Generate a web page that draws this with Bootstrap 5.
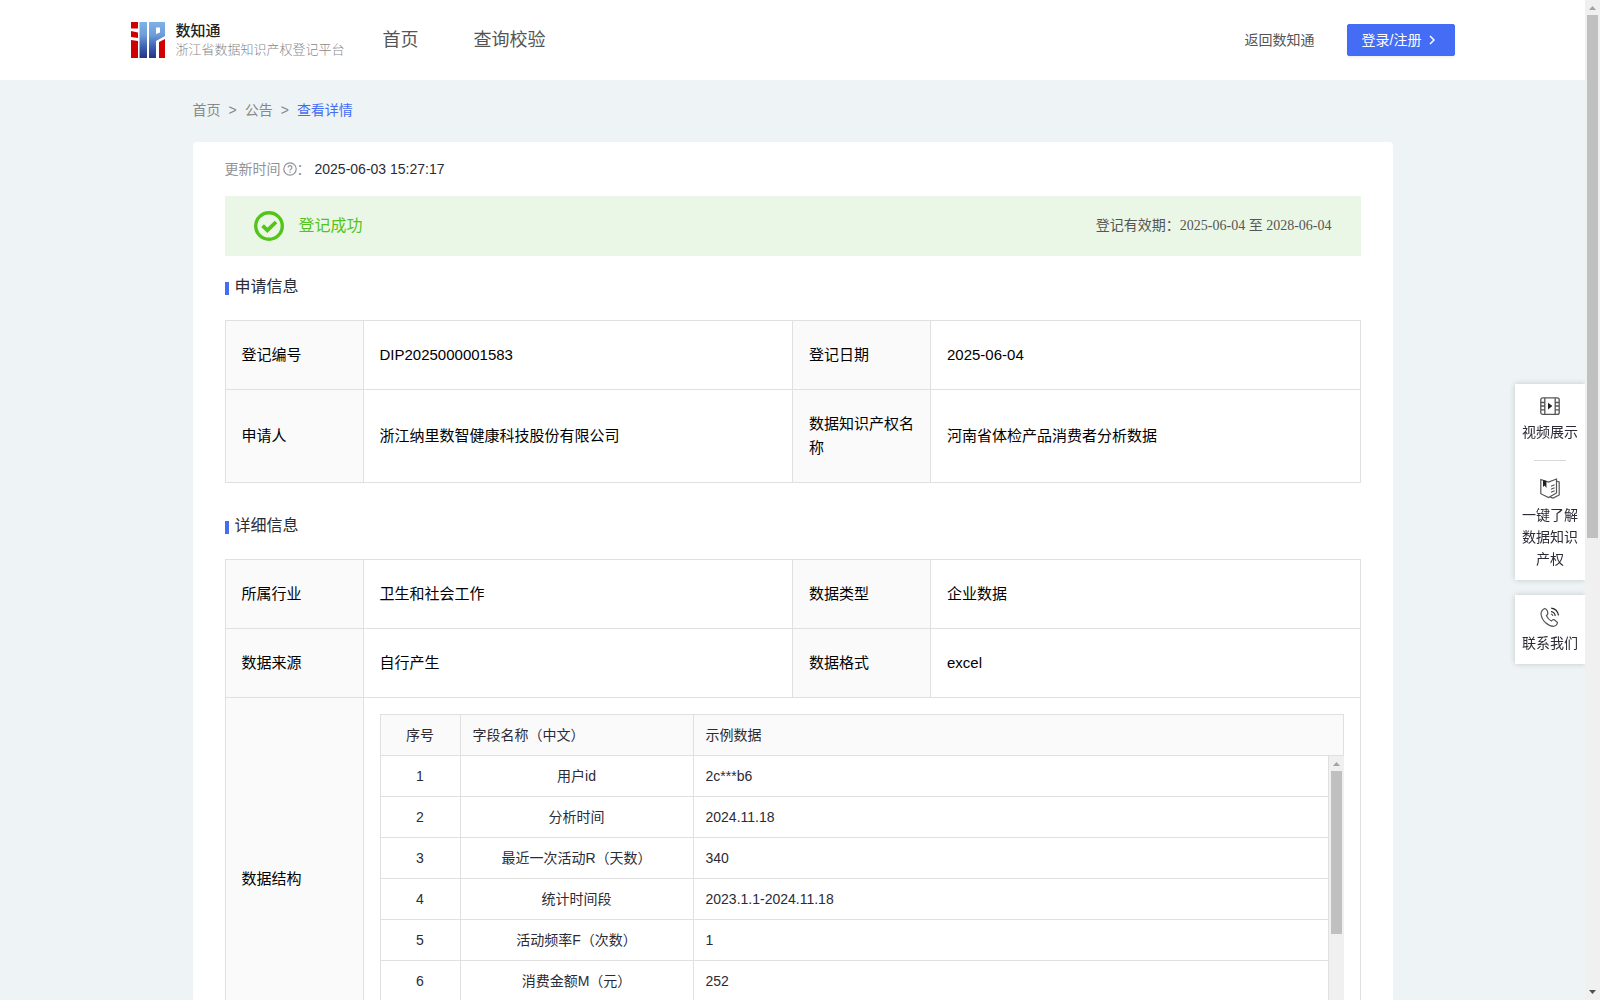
<!DOCTYPE html>
<html lang="zh-CN">
<head>
<meta charset="utf-8">
<meta name="viewport" content="width=device-width, initial-scale=1">
<title>浙江省数据知识产权登记平台</title>
<link href="https://cdn.jsdelivr.net/npm/bootstrap@5.3.0/dist/css/bootstrap.min.css" rel="stylesheet">
<style>
  :root { --brand: #446cf4; --line: #e0e0e0; --cjk: "Noto Sans CJK SC"; }
  body { font: 14px/22px "Liberation Sans", var(--cjk), sans-serif; color: #2b2b36; background: #eef3f6; }
  a { text-decoration: none; color: inherit; }
  .shell { height: 100vh; }
  .page-view { overflow-y: auto; scrollbar-width: none; min-width: 0; }
  .page-view::-webkit-scrollbar, .grid-rows::-webkit-scrollbar { display: none; }

  .scroll-track { width: 15px; flex: none; background: #f0f0f0; }
  .scroll-track svg { display: block; flex: none; }
  .scroll-thumb { width: 11px; background: #c0c0c0; }
  .page-thumb { height: 523px; }
  .grid-thumb { height: 163px; }

  .site-header { background: #fff; height: 80px; }
  .header-inner { max-width: 1324px; }
  .brand-link { gap: 10px; }
  .brand-name { font-size: 15px; line-height: 20px; font-weight: 500; color: #222; }
  .brand-sub { font-size: 13px; line-height: 18px; font-weight: 300; color: #888; }
  .site-nav { gap: 55px; margin-left: 38px; font-size: 18px; line-height: 24px; color: #555; }
  .back-link { color: #555; }
  .btn-login { --bs-btn-font-size: 14px; --bs-btn-bg: var(--brand); --bs-btn-color: #fff; --bs-btn-border-color: var(--brand);
    --bs-btn-hover-bg: #345ce4; --bs-btn-hover-color: #fff; --bs-btn-border-radius: 2px;
    width: 108px; height: 32px; padding: 0 14px; line-height: 22px; box-shadow: 0 2px 2px rgba(0,0,0,.05); }

  .page-width { max-width: 1200px; }
  .crumbs { padding: 19px 0 21px; color: #888; gap: 8px; }
  .crumbs .current { color: var(--brand); }
  .sheet { background: #fff; border-radius: 4px; padding: 16px 32px 32px; }
  .muted { color: #909399; }
  .help-icon { margin-left: 2px; }
  .status-bar { background: #ebf7e6; height: 60px; padding: 0 29px; margin-top: 16px; gap: 15px; }
  .status-text { color: #52c41a; font-size: 16px; }
  .valid-term { color: #555; font-family: "Liberation Serif", var(--cjk), serif; }
  .section-title { font-size: 16px; line-height: 24px; font-weight: 400; margin: 19px 0 21px; gap: 6px; }
  .section-title::before { content: ""; width: 4px; height: 13px; margin-top: 2px; background: var(--brand); }

  .info-table { table-layout: fixed; font-size: 15px; line-height: 24px; color: #000; border-color: var(--line); margin-bottom: 31px; vertical-align: middle; }
  .info-table > tbody > tr > * { padding: 22px 16px; color: #000; }
  .info-table > tbody > tr > th { background: #fafafa; font-weight: 400; }
  .info-table .label-col { width: 138px; }
  .info-table > tbody > tr > .grid-cell { padding: 16px; }

  .data-grid { border: solid var(--line); border-width: 1px 0 0 1px; font-size: 14px; line-height: 22px; color: #2b2b36; }
  .data-grid table { width: 100%; table-layout: fixed; border-collapse: separate; border-spacing: 0; }
  .data-grid th, .data-grid td { height: 41px; padding: 0 12px; border: solid var(--line); border-width: 0 1px 1px 0; font-weight: 400; }
  .data-grid th { background: #fafafa; }
  .grid-rows { height: 287px; overflow-y: auto; scrollbar-width: none; }
  .col-index { width: 80px; }
  .col-field { width: 233px; }

  .side-dock { position: fixed; right: 15px; top: 384px; width: 70px; z-index: 10; gap: 15px; text-align: center; }
  .dock-box { background: #fff; box-shadow: 0 0 6px rgba(0,0,0,.18); padding: 12px 6px 10px; clip-path: inset(-8px 0 -8px -8px); }
  .dock-box svg { display: block; margin: 0 auto 5px; }
  .dock-rule { width: 32px; border-top: 1px solid #d8d8d8; margin: 17px auto; }
</style>
<script src="https://cdn.jsdelivr.net/npm/bootstrap@5.3.0/dist/js/bootstrap.bundle.min.js"></script>
</head>
<body>
<div class="shell d-flex">
  <div class="page-view flex-grow-1">
    <header class="site-header d-flex align-items-center">
      <div class="header-inner container-fluid px-0 d-flex align-items-center">
        <a href="#" class="brand-link d-flex align-items-center">
          <svg width="35" height="36" viewBox="0 0 35 36" aria-hidden="true">
            <defs><linearGradient id="lg" x1="0" y1="0" x2="0" y2="1"><stop offset="0" stop-color="#7fb0e6"/><stop offset=".35" stop-color="#6f9edb"/><stop offset=".7" stop-color="#3c5fae"/><stop offset="1" stop-color="#243484"/></linearGradient></defs>
            <path fill="#d00000" d="M0 0h7v6.500H0zM0 9l7 1.500V16L0 15zM0 18l7 1v17H0zM28 20l6-3v19h-6z"/>
            <path fill="url(#lg)" d="M8.500 0h7.500v36H8.500zM18 0h16v14l-9 5v17h-7zM25 5.500v6.500l4-1.500V5.500z"/>
          </svg>
          <span class="d-flex flex-column">
            <span class="brand-name">数知通</span>
            <span class="brand-sub">浙江省数据知识产权登记平台</span>
          </span>
        </a>
        <nav class="site-nav d-flex">
          <a href="#">首页</a>
          <a href="#">查询校验</a>
        </nav>
        <a href="#" class="back-link ms-auto me-4 pe-2">返回数知通</a>
        <button type="button" class="btn btn-login d-flex align-items-center">登录/注册
          <svg class="ms-2" width="6" height="10" viewBox="0 0 6 10" fill="none" stroke="#fff" stroke-width="1.5" aria-hidden="true"><path d="M1 1l4 4-4 4"/></svg>
        </button>
      </div>
    </header>

    <main class="page-width container-fluid px-0">
      <nav class="crumbs d-flex" aria-label="breadcrumb">
        <a href="#">首页</a><span>&gt;</span><a href="#">公告</a><span>&gt;</span><a href="#" class="current">查看详情</a>
      </nav>

      <div class="sheet">
        <div class="d-flex align-items-center">
          <span class="muted">更新时间</span>
          <svg class="help-icon" width="14" height="14" viewBox="0 0 14 14" fill="none" stroke="#909399" stroke-width="1.2" aria-hidden="true"><circle cx="7" cy="7" r="6.2"/><path d="M5.100 5.600a1.900 1.900 0 1 1 2.700 1.700q-.8.4-.8 1.200"/><path d="M7 9.600v1.200"/></svg>
          <span class="muted">：</span>
          <span class="ms-1">2025-06-03 15:27:17</span>
        </div>

        <div class="status-bar d-flex align-items-center">
          <svg width="30" height="30" viewBox="0 0 30 30" fill="none" stroke="#52c41a" aria-hidden="true"><circle cx="15" cy="15" r="13.300" stroke-width="3.400"/><path d="M8.600 14.600l4.800 4.800 8.600-8.400" stroke-width="3.800"/></svg>
          <span class="status-text">登记成功</span>
          <span class="valid-term ms-auto">登记有效期：2025-06-04 至 2028-06-04</span>
        </div>

        <h2 class="section-title d-flex align-items-center">申请信息</h2>
        <table class="table table-bordered info-table">
          <colgroup><col class="label-col"><col><col class="label-col"><col></colgroup>
          <tbody>
            <tr><th scope="row">登记编号</th><td>DIP2025000001583</td><th scope="row">登记日期</th><td>2025-06-04</td></tr>
            <tr><th scope="row">申请人</th><td>浙江纳里数智健康科技股份有限公司</td><th scope="row">数据知识产权名称</th><td>河南省体检产品消费者分析数据</td></tr>
          </tbody>
        </table>

        <h2 class="section-title d-flex align-items-center">详细信息</h2>
        <table class="table table-bordered info-table">
          <colgroup><col class="label-col"><col><col class="label-col"><col></colgroup>
          <tbody>
            <tr><th scope="row">所属行业</th><td>卫生和社会工作</td><th scope="row">数据类型</th><td>企业数据</td></tr>
            <tr><th scope="row">数据来源</th><td>自行产生</td><th scope="row">数据格式</th><td>excel</td></tr>
            <tr>
              <th scope="row">数据结构</th>
              <td colspan="3" class="grid-cell">
                <div class="data-grid">
                  <table>
                    <colgroup><col class="col-index"><col class="col-field"><col></colgroup>
                    <thead><tr><th class="text-center">序号</th><th>字段名称（中文）</th><th>示例数据</th></tr></thead>
                  </table>
                  <div class="d-flex">
                    <div class="grid-rows flex-grow-1">
                      <table>
                        <colgroup><col class="col-index"><col class="col-field"><col></colgroup>
                        <tbody>
                          <tr><td class="text-center">1</td><td class="text-center">用户id</td><td>2c***b6</td></tr>
                          <tr><td class="text-center">2</td><td class="text-center">分析时间</td><td>2024.11.18</td></tr>
                          <tr><td class="text-center">3</td><td class="text-center">最近一次活动R（天数）</td><td>340</td></tr>
                          <tr><td class="text-center">4</td><td class="text-center">统计时间段</td><td>2023.1.1-2024.11.18</td></tr>
                          <tr><td class="text-center">5</td><td class="text-center">活动频率F（次数）</td><td>1</td></tr>
                          <tr><td class="text-center">6</td><td class="text-center">消费金额M（元）</td><td>252</td></tr>
                        </tbody>
                      </table>
                    </div>
                    <div class="scroll-track d-flex flex-column align-items-center" aria-hidden="true">
                      <svg width="15" height="15"><path d="M4 10h7L7.500 6z" fill="#a3a3a3"/></svg>
                      <div class="scroll-thumb grid-thumb"></div>
                    </div>
                  </div>
                </div>
              </td>
            </tr>
          </tbody>
        </table>
      </div>
    </main>
  </div>

  <div class="scroll-track d-flex flex-column align-items-center" aria-hidden="true">
    <svg width="15" height="15"><path d="M4 10h7L7.500 6z" fill="#a3a3a3"/></svg>
    <div class="scroll-thumb page-thumb"></div>
    <svg class="mt-auto" width="15" height="15"><path d="M4 5h7L7.500 9z" fill="#505050"/></svg>
  </div>
</div>

<aside class="side-dock d-flex flex-column">
  <div class="dock-box">
    <a href="#" class="d-block">
      <svg width="20" height="20" viewBox="0 0 20 20" fill="none" stroke="#555" stroke-width="1.3" aria-hidden="true"><rect x=".8" y="1.8" width="18.400" height="16.600" rx="2"/><path d="M4.800 2v16M15.200 2v16M1 6.500h3.500M1 10h3.500M1 13.800h3.500M15.500 6.500H19M15.500 10H19M15.500 13.800H19"/><path d="M8 6.800v6.600l4.400-3.300z" fill="#222" stroke="none"/></svg>
      视频展示
    </a>
    <div class="dock-rule"></div>
    <a href="#" class="d-block">
      <svg width="20" height="21" viewBox="0 0 20 21" fill="none" stroke="#555" stroke-width="1.2" aria-hidden="true"><path d="M.8 1.500L8.500 4l8-3v14l-8 4.500-7.700-3.800z"/><path d="M17 3.200l2.200.8v13l-6 3-3-.8M11 8.300l3.600-1.600M11 11.300l3.600-1.600M11 14.300l3.600-1.600"/><path d="M3 2v7l1.600-1.400L6.400 10V3z" fill="#222" stroke="none"/></svg>
      一键了解数据知识产权
    </a>
  </div>
  <div class="dock-box">
    <a href="#" class="d-block">
      <svg width="20" height="20" viewBox="0 0 20 20" fill="none" stroke="#555" stroke-width="1.2" aria-hidden="true"><path d="M4.600 1.500Q1 3.500 1 7q.6 5 4.600 8.800Q9.400 19.300 13.500 19.300q3.500-.5 4-3.800L14 12.600q-1.200-.4-2.600 1.400-2.900-1.300-5-5.300Q8.400 7.200 7.600 4.600 6.600 1.500 4.600 1.500z"/><path d="M11 4.500q3.600.6 4.300 4.300M11.200 1.200q6.200.8 7.300 7.200" stroke="#222"/><path d="M11 7q1.500.3 1.900 1.900"/></svg>
      联系我们
    </a>
  </div>
</aside>
</body>
</html>
